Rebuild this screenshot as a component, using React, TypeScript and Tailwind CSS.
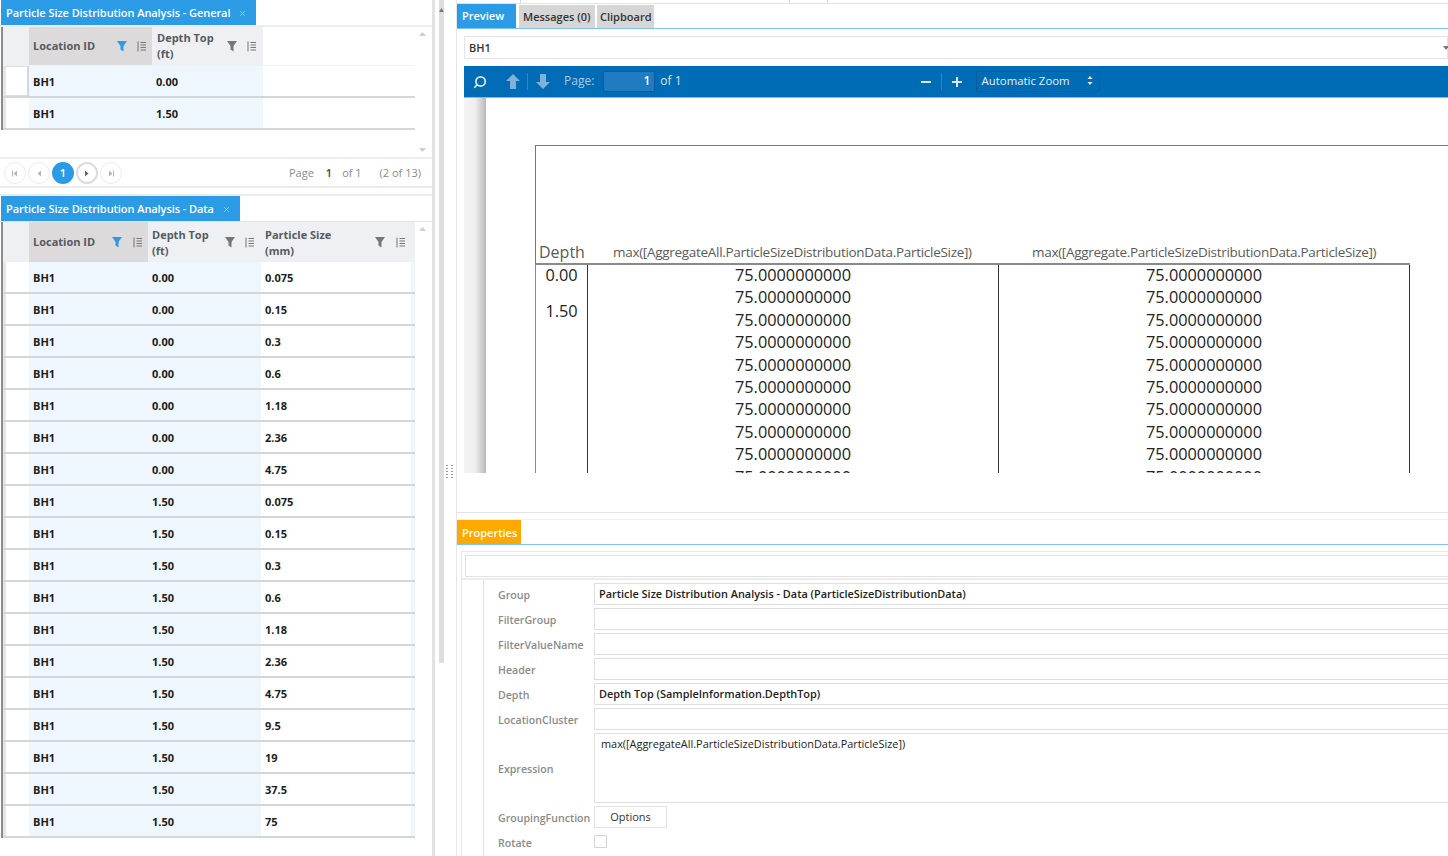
import React from "react";
import { Search, X } from "lucide-react";

const Funnel = ({ blue }: { blue?: boolean }) => (
  <svg width="10" height="12" viewBox="0 0 10 12" className={blue ? "text-[#2b9be6]" : "text-[#777777]"}>
    <path d="M0 1h10L6.5 6v5.5l-3-2V6z" fill="currentColor" />
  </svg>
);
const SortIcon = () => (
  <svg width="10" height="11" viewBox="0 0 10 11" className="text-[#777777]">
    <path d="M1 0.5v10M3.5 1.5H9M3.5 4H9M3.5 6.5H9M3.5 9H9" stroke="currentColor" strokeWidth="1" fill="none" />
  </svg>
);

const HeaderCell = ({ w, lines, blue, active, pl, pr, gap, tp }: { w: string; lines: string[]; blue?: boolean; active?: boolean; pl: string; pr: string; gap: string; tp?: string }) => (
  <div className={`${w} ${pl} ${pr} ${active ? "bg-[#dcdadb]" : "bg-[#eef0f4]"} h-full flex items-center shrink-0`}>
    <div className={`flex-1 font-bold text-[11px] leading-[16px] text-[#555b61] whitespace-nowrap ${tp ?? ""}`}>
      {lines.map((l) => (
        <div key={l}>{l}</div>
      ))}
    </div>
    <div className={`flex items-center ${gap}`}>
      <Funnel blue={blue} />
      <SortIcon />
    </div>
  </div>
);

const Row = ({ cells, widths, selected, trailing }: { cells: string[]; widths: string[]; selected?: boolean; trailing?: boolean }) => (
  <div className="flex h-[32px] w-[412px] border-b-2 border-[#d2d7dc]">
    <div className={`w-[26px] shrink-0 bg-white border-l-[3px] border-[#e6e6e6] ${selected ? "border-y-[1px] border-r-[2px] border-y-[#dcdee0] border-r-[#d5d7da]" : ""}`} />
    {cells.map((c, i) => (
      <div key={i} className={`${widths[i]} shrink-0 flex items-center pt-[2px] pl-[4px] font-bold text-[11px] text-[#1c1c1c] ${i === 2 ? "bg-white" : "bg-[#eef7fd]"}`}>
        {c}
      </div>
    ))}
    {trailing && <div className="flex-1 bg-[#eef7fd]" />}
  </div>
);

const PanelTab = ({ title, w, tp }: { title: string; w: string; tp: string }) => (
  <div className={`${w} ${tp} h-[25px] ml-[1px] bg-[#2b9be6] text-white flex items-center justify-between pl-[5px] pr-[9px] text-[11px] tracking-[-0.07px] font-semibold whitespace-nowrap`}>
    <span>{title}</span>
    <X size={9} strokeWidth={1.5} className="text-[#cfe8fa]" />
  </div>
);

const ScrollUp = () => (
  <svg width="7" height="4" viewBox="0 0 7 4" className="text-[#cfcfcf]"><path d="M0 4l3.5-4L7 4z" fill="currentColor" /></svg>
);
const ScrollDown = () => (
  <svg width="7" height="4" viewBox="0 0 7 4" className="text-[#cfcfcf]"><path d="M0 0l3.5 4L7 0z" fill="currentColor" /></svg>
);

const PageDot = ({ children, active, ring }: { children?: React.ReactNode; active?: boolean; ring?: boolean }) => (
  <div className={`w-[22px] h-[22px] rounded-full flex items-center justify-center text-[11px] font-semibold ${active ? "bg-[#2b9be6] text-white" : ring ? "bg-white border-2 border-[#dcdcdc] text-[#666666]" : "bg-white border border-[#ececec] text-[#b5b5b5]"}`}>
    {children}
  </div>
);

const Tri = ({ d, bar }: { d: "l" | "r"; bar?: boolean }) => (
  <svg width="8" height="7" viewBox="0 0 8 7">
    {d === "l" ? <path d="M6 0.5v6L2.5 3.5z" fill="currentColor" /> : <path d="M2 0.5v6L5.5 3.5z" fill="currentColor" />}
    {bar && (d === "l" ? <rect x="1" y="0.5" width="1" height="6" fill="currentColor" /> : <rect x="6" y="0.5" width="1" height="6" fill="currentColor" />)}
  </svg>
);

const dataRows: [string, string][] = [
  ["0.00", "0.075"], ["0.00", "0.15"], ["0.00", "0.3"], ["0.00", "0.6"], ["0.00", "1.18"], ["0.00", "2.36"], ["0.00", "4.75"],
  ["1.50", "0.075"], ["1.50", "0.15"], ["1.50", "0.3"], ["1.50", "0.6"], ["1.50", "1.18"], ["1.50", "2.36"], ["1.50", "4.75"],
  ["1.50", "9.5"], ["1.50", "19"], ["1.50", "37.5"], ["1.50", "75"],
];

const LeftColumn = () => (
  <div className="w-[435px] shrink-0 h-full border-r-[3px] border-[#e2e2e2] bg-white overflow-hidden">
    <PanelTab title="Particle Size Distribution Analysis - General" w="w-[255px]" tp="pt-[1px]" />
    <div className="h-[132px] border-t-2 border-[#ececec] flex">
      <div className="w-[412px] shrink-0 ml-[1px] border-l-[2px] border-[#8c8c8c] self-start">
        <div className="flex h-[39px] border-b border-[#f0f0f0]">
          <div className="w-[26px] bg-[#eef0f4] shrink-0" />
          <HeaderCell w="w-[123px]" lines={["Location ID"]} blue active pl="pl-[4px]" pr="pr-[5px]" gap="gap-[10px]" />
          <HeaderCell w="w-[111px]" lines={["Depth Top", "(ft)"]} pl="pl-[5px]" pr="pr-[6px]" gap="gap-[10px]" />
        </div>
        <Row selected cells={["BH1", "0.00"]} widths={["w-[123px]", "w-[111px]"]} />
        <Row cells={["BH1", "1.50"]} widths={["w-[123px]", "w-[111px]"]} />
      </div>
      <div className="ml-[6px] h-full flex flex-col justify-between items-center py-[5px]">
        <ScrollUp />
        <ScrollDown />
      </div>
    </div>
    <div className="h-[31px] border-y-2 border-[#ececec] flex items-center pl-[4px] pr-[11px] pt-[1px]">
      <div className="flex items-center gap-[2px]">
        <PageDot><Tri d="l" bar /></PageDot>
        <PageDot><Tri d="l" /></PageDot>
        <PageDot active>1</PageDot>
        <PageDot ring><Tri d="r" /></PageDot>
        <PageDot><Tri d="r" bar /></PageDot>
      </div>
      <div className="ml-auto flex items-center text-[11px] text-[#8a8a8a]">
        <span>Page</span>
        <span className="ml-[12px] font-semibold text-[#444444]">1</span>
        <span className="ml-[10px]">of 1</span>
        <span className="ml-[18px]">(2 of 13)</span>
      </div>
    </div>
    <div className="h-[8px] border-b-2 border-[#ececec]" />
    <PanelTab title="Particle Size Distribution Analysis - Data" w="w-[239px]" tp="pt-[2px]" />
    <div className="border-t border-[#e4e4e4] flex">
      <div className="w-[412px] shrink-0 ml-[1px] border-l-[2px] border-[#8c8c8c]">
        <div className="flex h-[40px]">
          <div className="w-[26px] bg-[#eef0f4] shrink-0" />
          <HeaderCell w="w-[119px]" lines={["Location ID"]} blue active pl="pl-[4px]" pr="pr-[5px]" gap="gap-[11px]" />
          <HeaderCell w="w-[113px]" lines={["Depth Top", "(ft)"]} pl="pl-[4px]" pr="pr-[6px]" gap="gap-[10px]" tp="pt-[2px]" />
          <HeaderCell w="w-[154px]" lines={["Particle Size", "(mm)"]} pl="pl-[4px]" pr="pr-[9px]" gap="gap-[11px]" tp="pt-[2px]" />
        </div>
        {dataRows.map((r, i) => (
          <Row key={i} cells={["BH1", r[0], r[1]]} widths={["w-[119px]", "w-[113px]", "w-[150px]"]} trailing />
        ))}
      </div>
      <div className="ml-[6px] pt-[5px]">
        <ScrollUp />
      </div>
    </div>
  </div>
);

const Splitter = () => (
  <div className="w-[22px] shrink-0 h-full flex bg-white">
    <div className="w-[5px] ml-[4px] h-full shrink-0">
      <div className="h-[663px] bg-[#dedede] flex justify-center pt-[8px]">
        <svg width="5" height="4" viewBox="0 0 5 4" className="text-[#777777]"><path d="M0 4l2.5-4L5 4z" fill="currentColor" /></svg>
      </div>
    </div>
    <div className="w-[13px] ml-0 h-full flex flex-col justify-center border-r border-[#e6e6e6]">
      <div className="grid grid-cols-2 gap-x-[3px] gap-y-[2px] w-[7px] ml-[2px] mb-[-86px]">
        {Array.from({ length: 10 }).map((_, i) => (
          <div key={i} className="w-[2px] h-[1px] bg-[#9a9a9a]" />
        ))}
      </div>
    </div>
  </div>
);

const DocColumn = ({ w }: { w: string }) => (
  <div className={`${w} shrink-0 text-center text-[16.3px] leading-[22.4px] text-[#222222] border-r border-[#333333]`}>
    <div className="-mt-[1px]">
      {Array.from({ length: 10 }).map((_, i) => (
        <div key={i}>75.0000000000</div>
      ))}
    </div>
  </div>
);

const PdfViewer = () => (
  <div className="ml-[7px] h-[408px] flex flex-col">
    <div className="h-[32px] bg-[#006cb5] border-b border-[#8fb8d8] flex items-center text-[#d7e6f2] text-[12px] shrink-0">
      <Search size={14} strokeWidth={3} className="ml-[9px] -scale-x-100 text-[#dbe9f4]" />
      <svg width="16" height="17" viewBox="0 0 16 17" className="ml-[18px] text-[#7fb2d8]"><path d="M8 1L15 8h-4v8H5V8H1z" fill="currentColor" /></svg>
      <div className="w-px h-[17px] bg-[#2f86c2] ml-[6px]" />
      <svg width="16" height="17" viewBox="0 0 16 17" className="ml-[7px] text-[#7fb2d8]"><path d="M8 16L1 9h4V1h6v8h4z" fill="currentColor" /></svg>
      <span className="ml-[13px] mb-[2px] text-[#a9cbe5]">Page:</span>
      <div className="ml-[9px] w-[52px] h-[21px] mb-[1px] pb-[1px] bg-[#1f7cc0] border border-[#0a5c99] rounded-[2px] flex items-center justify-end pr-[4px] text-white font-semibold">1</div>
      <span className="ml-[5px] mb-[2px]">of 1</span>
      <svg width="12" height="12" viewBox="0 0 12 12" className="ml-[238px] text-[#dbe9f4]"><rect x="1" y="5" width="10" height="2" fill="currentColor" /></svg>
      <div className="w-px h-[17px] bg-[#2f86c2] ml-[9px]" />
      <svg width="12" height="12" viewBox="0 0 12 12" className="ml-[9px] text-[#dbe9f4]"><path d="M5 1h2v4h4v2H7v4H5V7H1V5h4z" fill="currentColor" /></svg>
      <div className="ml-[13px] w-[124px] h-[21px] mb-[1px] pb-[1px] border border-[#0a5c99] rounded-[2px] flex items-center pl-[5px] pr-[6px] text-[#e6f0f7] justify-between text-[11.4px]">
        <span>Automatic Zoom</span>
        <svg width="6" height="9" viewBox="0 0 6 9" className="text-[#dbe9f4]"><path d="M3 0l2.5 3h-5zM3 9L.5 6h5z" fill="currentColor" /></svg>
      </div>
    </div>
    <div className="flex-1 flex overflow-hidden bg-white">
      <div className="w-[22px] shrink-0 bg-gradient-to-r from-[#f4f4f4] via-[#efefef] to-[#b9b9b9]" />
      <div className="ml-[49px] pt-[47px] flex-1 min-w-0 overflow-hidden">
        <div className="border-l border-t border-[#777777] h-[118px] flex items-end">
          <span className="ml-[3px] w-[74px] text-[16px] leading-[22px] text-[#5a5a5a]">Depth</span>
          <span className="w-[410px] text-[13.5px] tracking-[-0.3px] leading-[20px] text-[#5a5a5a] pb-[1px] whitespace-nowrap">max([AggregateAll.ParticleSizeDistributionData.ParticleSize])</span>
          <span className="w-[400px] ml-[9px] text-[13.5px] tracking-[-0.3px] leading-[20px] text-[#5a5a5a] pb-[1px] whitespace-nowrap">max([Aggregate.ParticleSizeDistributionData.ParticleSize])</span>
        </div>
        <div className="flex w-[875px] border-l border-t-2 border-[#8a8a8a] h-[210px] overflow-hidden">
          <div className="w-[52px] shrink-0 text-center border-r border-[#333333] text-[16.3px] text-[#222222] leading-[22.4px]">
            <div className="-mt-[1px] h-[36px]">0.00</div>
            <div>1.50</div>
          </div>
          <DocColumn w="w-[411px]" />
          <DocColumn w="w-[411px]" />
        </div>
      </div>
    </div>
  </div>
);

const PropRow = ({ label, value, h = "h-[25px]", tall, children }: { label: string; value?: string; h?: string; tall?: boolean; children?: React.ReactNode }) => (
  <div className={`flex ${h}`}>
    <div className="w-[110px] shrink-0 pl-[14px] flex items-center text-[10.6px] font-semibold text-[#8a8a8a] whitespace-nowrap">{label}</div>
    {children ?? (
      <div className={`flex-1 mb-[3px] border border-[#dfdfdf] bg-white pl-[4px] text-[#222222] ${tall ? "pl-[6px] pt-[2px] font-normal" : "flex items-center font-semibold"} text-[10.9px]`}>{value}</div>
    )}
  </div>
);

const Properties = () => (
  <div className="flex-1">
    <div className="h-[25px] border-b border-[#7cc4f4]">
      <div className="w-[64px] h-[24px] pt-[3px] bg-[#ffa800] text-white text-[11px] font-semibold flex items-center pl-[5px]">Properties</div>
    </div>
    <div className="ml-[4px] mt-[6px] w-[1100px] border border-[#e8e8e8] border-b-0 h-[305px]">
      <div className="h-[28px] border-b-2 border-[#ececec] px-[3px] pt-[3px]">
        <div className="h-[22px] border border-[#e2e2e2]" />
      </div>
      <div className="flex h-full">
        <div className="w-[22px] shrink-0 border-r border-[#e2e2e2]" />
        <div className="flex-1 pt-[3px]">
          <PropRow label="Group" value="Particle Size Distribution Analysis - Data (ParticleSizeDistributionData)" />
          <PropRow label="FilterGroup" value="" />
          <PropRow label="FilterValueName" value="" />
          <PropRow label="Header" value="" />
          <PropRow label="Depth" value="Depth Top (SampleInformation.DepthTop)" />
          <PropRow label="LocationCluster" value="" />
          <PropRow label="Expression" value="max([AggregateAll.ParticleSizeDistributionData.ParticleSize])" h="h-[73px]" tall />
          <PropRow label="GroupingFunction">
            <div className="w-[73px] h-[22px] border border-[#e2e2e2] flex items-center justify-center text-[11px] text-[#333333]">Options</div>
          </PropRow>
          <PropRow label="Rotate">
            <div className="w-[13px] h-[13px] mt-[4px] border border-[#d2d2d2] rounded-[1px]" />
          </PropRow>
        </div>
      </div>
    </div>
  </div>
);

const RightColumn = () => (
  <div className="flex-1 min-w-0 h-full flex flex-col overflow-hidden bg-white">
    <div className="h-[4px] border-b border-[#e4e4e4] flex shrink-0">
      <div className="w-[64px] border-r border-[#dcdcdc]" />
      <div className="w-[269px] border-r border-[#dcdcdc]" />
      <div className="w-[38px] border-r border-[#dcdcdc]" />
    </div>
    <div className="h-[25px] border-b border-[#7cc4f4] flex items-stretch gap-[2px] shrink-0 text-[11px] font-semibold">
      <div className="w-[59px] pt-[1px] bg-[#2b9be6] text-white flex items-center pl-[5px]">Preview</div>
      <div className="w-[76px] ml-[1px] bg-[#d6d6d6] text-[#333333] flex items-center pl-[4px] mt-[1px] pt-[1px] whitespace-nowrap">Messages (0)</div>
      <div className="w-[57px] bg-[#d6d6d6] text-[#333333] flex items-center pl-[3px] mt-[1px] pt-[1px]">Clipboard</div>
    </div>
    <div className="ml-[7px] mt-[7px] h-[23px] pt-[1px] border border-[#e4e4e4] flex items-center justify-between pl-[4px] text-[11px] font-semibold text-[#333333] shrink-0">
      <span>BH1</span>
      <svg width="6" height="4" viewBox="0 0 6 4" className="text-[#777777] mr-[-2px]"><path d="M0 0h6L3 4z" fill="currentColor" /></svg>
    </div>
    <div className="h-[7px] shrink-0" />
    <PdfViewer />
    <div className="h-[40px] shrink-0 border-b border-[#e4e4e4]" />
    <div className="h-[7px] shrink-0 border-b border-[#f0f0f0]" />
    <Properties />
  </div>
);

export default function App() {
  return (
    <div className="w-[1448px] h-[856px] flex overflow-hidden bg-white" style={{ fontFamily: '"Open Sans", "Noto Sans", sans-serif' }}>
      <LeftColumn />
      <Splitter />
      <RightColumn />
    </div>
  );
}
